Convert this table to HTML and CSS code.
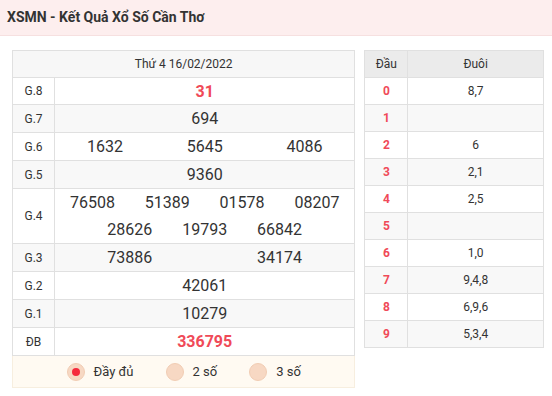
FILE: index.html
```html
<!DOCTYPE html>
<html lang="vi">
<head>
<meta charset="utf-8">
<link rel="stylesheet" href="styles.css">
</head>
<body>
<header class="top">XSMN - Kết Quả Xổ Số Cần Thơ</header>
<main class="wrap">
  <section class="board">
    <div class="date">Thứ 4 16/02/2022</div>
    <div class="row"><div class="lbl">G.8</div><div class="val"><span class="n red w1">31</span></div></div>
    <div class="row alt"><div class="lbl">G.7</div><div class="val"><span class="n w1">694</span></div></div>
    <div class="row"><div class="lbl">G.6</div><div class="val"><span class="n w3">1632</span><span class="n w3">5645</span><span class="n w3">4086</span></div></div>
    <div class="row alt"><div class="lbl">G.5</div><div class="val"><span class="n w1">9360</span></div></div>
    <div class="row dbl"><div class="lbl">G.4</div><div class="val"><span class="n w4">76508</span><span class="n w4">51389</span><span class="n w4">01578</span><span class="n w4">08207</span><span class="n w4">28626</span><span class="n w4">19793</span><span class="n w4">66842</span></div></div>
    <div class="row alt"><div class="lbl">G.3</div><div class="val"><span class="n w2">73886</span><span class="n w2">34174</span></div></div>
    <div class="row"><div class="lbl">G.2</div><div class="val"><span class="n w1">42061</span></div></div>
    <div class="row alt"><div class="lbl">G.1</div><div class="val"><span class="n w1">10279</span></div></div>
    <div class="row"><div class="lbl">ĐB</div><div class="val"><span class="n red w1">336795</span></div></div>
    <div class="opts">
      <label class="opt"><span class="dot on"></span>Đầy đủ</label>
      <label class="opt"><span class="dot"></span>2 số</label>
      <label class="opt"><span class="dot"></span>3 số</label>
    </div>
  </section>
  <section class="lt">
    <div class="lrow head"><div class="c1">Đầu</div><div class="c2">Đuôi</div></div>
    <div class="lrow"><div class="c1 red">0</div><div class="c2">8,7</div></div>
    <div class="lrow alt"><div class="c1 red">1</div><div class="c2"></div></div>
    <div class="lrow"><div class="c1 red">2</div><div class="c2">6</div></div>
    <div class="lrow alt"><div class="c1 red">3</div><div class="c2">2,1</div></div>
    <div class="lrow"><div class="c1 red">4</div><div class="c2">2,5</div></div>
    <div class="lrow alt"><div class="c1 red">5</div><div class="c2"></div></div>
    <div class="lrow"><div class="c1 red">6</div><div class="c2">1,0</div></div>
    <div class="lrow alt"><div class="c1 red">7</div><div class="c2">9,4,8</div></div>
    <div class="lrow"><div class="c1 red">8</div><div class="c2">6,9,6</div></div>
    <div class="lrow alt"><div class="c1 red">9</div><div class="c2">5,3,4</div></div>
  </section>
</main>
</body>
</html>
```
FILE: styles.css
```css
* { box-sizing: border-box; }
body {
  margin: 0;
  font-family: Roboto, "Liberation Sans", Arial, sans-serif;
  color: #333;
  background: #fff;
}
.top {
  height: 36px;
  background: #fdeeee;
  border-bottom: 1px solid #f6e0e0;
  padding-left: 7px;
  font-size: 14px;
  font-weight: 700;
  line-height: 35px;
  color: #333;
}
.wrap {
  display: flex;
  align-items: flex-start;
  gap: 9px;
  padding: 14px 8px 0 12px;
}
.board {
  width: 344px;
  border: 1px solid #e0e0e0;
  border-bottom: none;
}
.date {
  height: 27px;
  line-height: 26px;
  background: #f7f7f7;
  border-bottom: 1px solid #e0e0e0;
  text-align: center;
  font-size: 12px;
}
.row {
  display: flex;
  height: 28px;
  border-bottom: 1px solid #e0e0e0;
}
.row:nth-of-type(2) { height: 27px; }
.row.alt { background: #f8f8f8; }
.row.dbl { height: 55px; }
.lbl {
  width: 42px;
  flex: none;
  border-right: 1px solid #e0e0e0;
  display: flex;
  align-items: center;
  justify-content: center;
  font-size: 12px;
}
.val {
  flex: 1;
  display: flex;
  flex-wrap: wrap;
  justify-content: center;
  align-content: center;
}
.n {
  display: block;
  text-align: center;
  font-size: 16px;
  line-height: 27px;
  color: #333;
}
.w1 { width: 100%; }
.w2 { width: 50%; }
.w3 { width: 33.333%; }
.w4 { width: 25%; }
.n.red, .red { color: #f04a58; font-weight: 700; }
.opts {
  height: 32px;
  background: #fffaf2;
  border: 1px solid #f7eedf;
  border-top: none;
  margin: 0 -1px;
  display: flex;
  justify-content: center;
  align-items: center;
}
.opt {
  display: flex;
  align-items: center;
  font-size: 13px;
  color: #333;
  margin: 0 16px;
}
.dot {
  width: 18px;
  height: 18px;
  border-radius: 50%;
  background: #f7d8c3;
  border: 1px solid #f1cdb4;
  margin-right: 9px;
  display: flex;
  align-items: center;
  justify-content: center;
}
.dot.on::after {
  content: "";
  width: 8px;
  height: 8px;
  border-radius: 50%;
  background: #f52a3c;
}
.lt {
  width: 180px;
  border: 1px solid #e0e0e0;
  border-bottom: none;
}
.lrow {
  display: flex;
  height: 27px;
  border-bottom: 1px solid #e0e0e0;
  font-size: 12px;
  line-height: 26px;
  text-align: center;
}
.lrow.head { background: #ebebeb; font-size: 12px; }
.lrow.alt { background: #f8f8f8; }
.c1 {
  width: 43px;
  flex: none;
  border-right: 1px solid #e0e0e0;
}
.c2 { flex: 1; }
```
